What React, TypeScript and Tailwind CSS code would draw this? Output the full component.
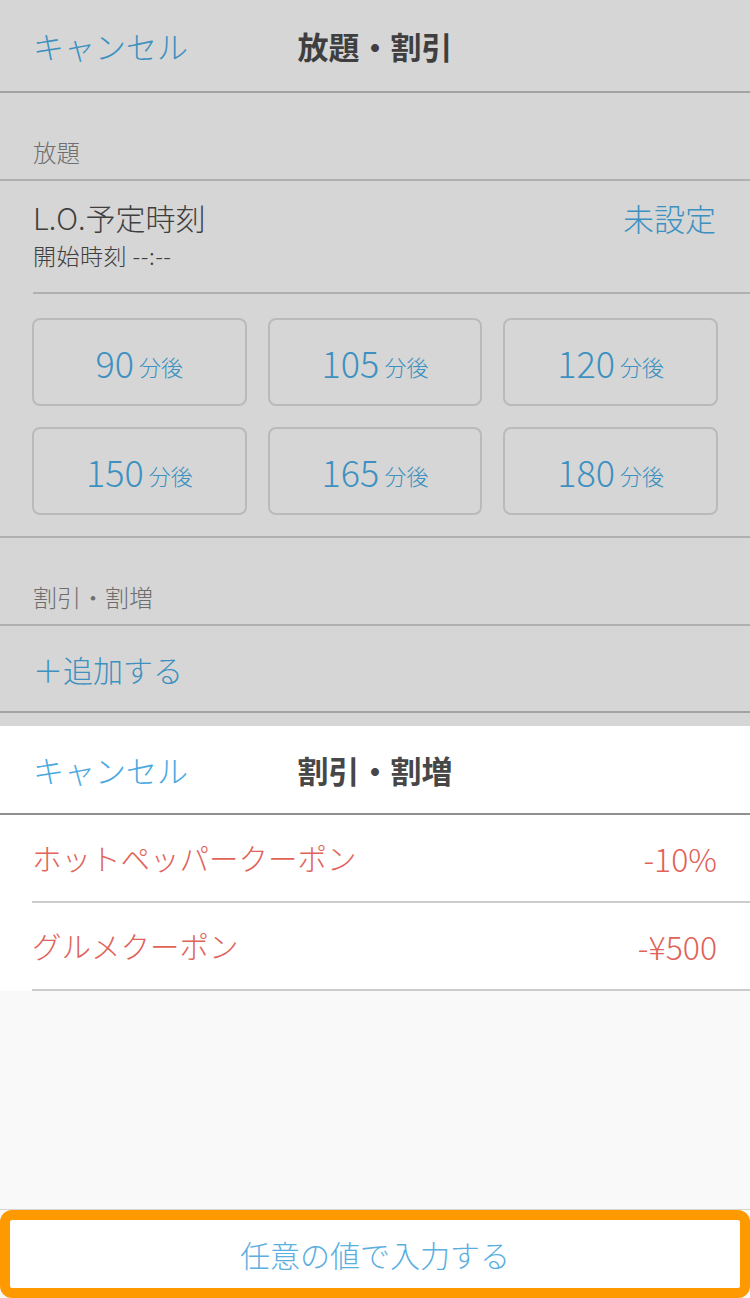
import React from 'react';

const font = { fontFamily: '"Noto Sans CJK JP", "Noto Sans", sans-serif' };

const presets = [90, 105, 120, 150, 165, 180];

const coupons = [
  { name: 'ホットペッパークーポン', value: '-10%' },
  { name: 'グルメクーポン', value: '-¥500' },
];

export default function App() {
  return (
    <div className="flex h-[1298px] w-[750px] flex-col overflow-hidden bg-[#f9f9f9] font-light" style={font}>
      {/* Dimmed background screen */}
      <div className="flex h-[726px] flex-col bg-[#d6d6d6]">
        <div className="relative flex h-[93px] items-center border-b-2 border-[#a3a3a3] px-[33px]">
          <span className="text-[31px] leading-none text-[#3d91c0]">キャンセル</span>
          <span className="absolute left-1/2 -translate-x-1/2 text-[31px] font-bold leading-none text-[#3f3f3f]">
            放題・割引
          </span>
        </div>

        <div className="flex h-[88px] items-end border-b-2 border-[#b0b0b0] px-[33px] pb-[15px]">
          <span className="text-[23.5px] leading-none text-[#6e6e6e]">放題</span>
        </div>

        <div className="pl-[33px]">
          <div className="flex h-[113px] items-start justify-between border-b-2 border-[#b0b0b0] pr-[34px] pt-[21px]">
            <div className="flex flex-col">
              <span className="text-[30px] leading-none text-[#3f3f3f]">L.O.予定時刻</span>
              <span className="mt-[12px] text-[23px] leading-none tracking-[0.5px] text-[#3f3f3f]">開始時刻 --:--</span>
            </div>
            <span className="text-[31px] leading-none text-[#3d91c0]">未設定</span>
          </div>
        </div>

        <div className="grid h-[244px] grid-cols-3 content-start gap-x-[21px] gap-y-[21px] border-b-2 border-[#b0b0b0] px-[32px] pt-[24px]">
          {presets.map(m => (
            <div
              key={m}
              className="flex h-[88px] items-center justify-center rounded-[8px] border-2 border-[#bababa]"
            >
              <span className="text-[36px] leading-none text-[#3d91c0]">{m}</span>
              <span className="ml-[5px] mt-[8px] text-[22px] leading-none text-[#3d91c0]">分後</span>
            </div>
          ))}
        </div>

        <div className="flex h-[88px] items-end border-b-2 border-[#b0b0b0] px-[33px] pb-[15px]">
          <span className="text-[24px] leading-none text-[#6e6e6e]">割引・割増</span>
        </div>

        <div className="flex h-[87px] items-center border-b-2 border-[#a3a3a3] px-[33px]">
          <span className="text-[30px] leading-none text-[#3d91c0]">＋追加する</span>
        </div>
      </div>

      {/* Sheet */}
      <div className="bg-white">
        <div className="relative flex h-[89px] items-center border-b-2 border-[#8f8f8f] px-[33px]">
          <span className="text-[31px] leading-none text-[#4aa9e0]">キャンセル</span>
          <span className="absolute left-1/2 -translate-x-1/2 text-[31px] font-bold leading-none text-[#474747]">
            割引・割増
          </span>
        </div>
        <div className="pl-[32px]">
          {coupons.map(c => (
            <div
              key={c.name}
              className="flex h-[88px] items-center justify-between border-b-2 border-[#cccccc] pr-[33px]"
            >
              <span className="text-[29.5px] leading-none text-[#e0635a]">{c.name}</span>
              <span className="text-[32px] leading-none text-[#e0635a]">{c.value}</span>
            </div>
          ))}
        </div>
      </div>

      <div className="flex-1 border-b border-[#d4d4d4]" />

      <div className="flex h-[88px] items-center justify-center rounded-[12px] border-[10px] border-[#ff9900] bg-white">
        <span className="text-[30px] leading-none text-[#5aafdf]">任意の値で入力する</span>
      </div>
    </div>
  );
}
